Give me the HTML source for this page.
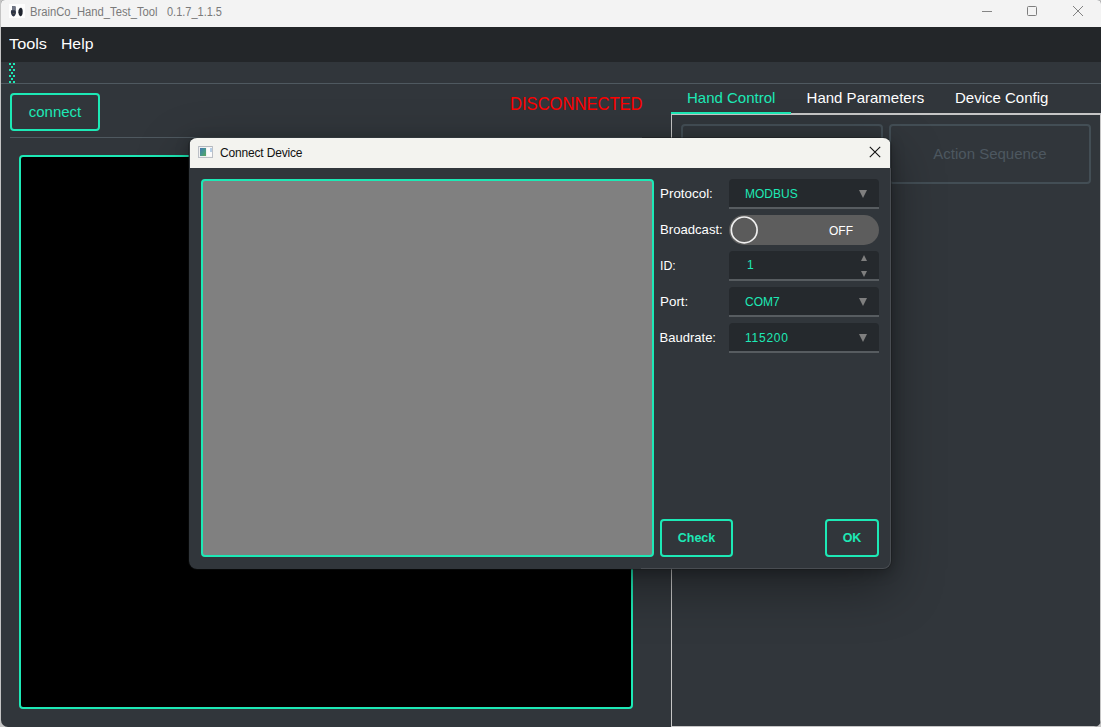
<!DOCTYPE html>
<html><head><meta charset="utf-8">
<style>
*{box-sizing:border-box;margin:0;padding:0}
html,body{width:1101px;height:727px;overflow:hidden;background:#c4c4c4;font-family:"Liberation Sans",sans-serif;}
.abs{position:absolute}
#win{position:absolute;left:1px;top:0;width:1100px;height:727px;background:#31363b;border-radius:4px 4px 7px 7px;overflow:hidden}
#tbar{position:absolute;left:0;top:0;width:1100px;height:27px;background:#f3f3f3}
.ttl{position:absolute;top:5px;transform-origin:0 0;font-size:12px;line-height:14px;color:#7a7a7a;white-space:pre}
#menu{position:absolute;left:0;top:27px;width:1100px;height:35px;background:#232629}
.mi{position:absolute;transform-origin:0 0;top:8px;font-size:15px;line-height:18px;color:#fff}
#tool{position:absolute;left:0;top:62px;width:1100px;height:21px;background:#31363b}
.hl{position:absolute;height:1px;background:#4f5960}
.btn{position:absolute;border:2px solid #1de9b6;border-radius:4px;color:#1de9b6;text-align:center}
.tab{position:absolute;top:89px;font-size:15px;line-height:18px;color:#fff;white-space:nowrap}
.dbtn{position:absolute;border:2px solid #434e55;border-radius:4px;color:#4d5860;text-align:center;font-size:15px}
#dlg{position:absolute;left:188px;top:138px;width:702px;height:431px;background:#31363b;border-radius:8px;overflow:hidden;}
#dshadow{position:absolute;left:188px;top:138px;width:702px;height:431px;border-radius:8px;box-shadow:0 0 0 1px rgba(20,22,24,.35),0 18px 50px 2px rgba(0,0,0,.36),0 3px 14px rgba(0,0,0,.28)}
#dbord{position:absolute;left:0;top:30px;width:702px;height:401px;clip-path:inset(0 0 0 452px);border:1px solid rgba(160,160,165,.22);border-top:none;border-radius:0 0 8px 8px}
#dtb{position:absolute;left:0;top:0;width:700px;height:30px;background:#f3f3ef}
.lbl{position:absolute;left:469.6px;transform-origin:0 0;transform:scaleX(1.03);font-size:13px;line-height:16px;color:#fff;white-space:nowrap}
.cmb{position:absolute;left:539px;width:150px;height:30px;background:#25292d;border-bottom:2px solid #575c60;border-radius:4px 4px 0 0}
.cmb span{position:absolute;left:16px;top:8px;font-size:12px;line-height:14px;color:#1de9b6;white-space:nowrap}
.arr{position:absolute;width:0;height:0;border-left:4.5px solid transparent;border-right:4.5px solid transparent;border-top:8px solid #7f7f7f}
</style></head><body>
<div id="win">
  <div id="tbar">
    <svg class="abs" style="left:8px;top:4px" width="16" height="14" viewBox="0 0 16 14"><rect width="16" height="14" fill="#fdfdfd"/><path d="M3 2.6 Q3.2 2 3.9 2 L5.6 2 Q6.3 2 6.5 2.8 L6.6 6.3 Q7.2 7.5 6.9 9.5 L6 11.5 Q5 12.6 4.3 12.5 Q3 12 2.4 10.5 Q1.6 8.5 2 6.6 L3 6 Z" fill="#2e3545"/><path d="M3 2.6 Q3.2 2 3.9 2 L5.6 2 Q6.3 2 6.5 2.8 L6.6 6.3 L3 6.3 Z" fill="#717786"/><rect x="3.8" y="9" width="1.6" height=".7" fill="#8a7a50" opacity=".7"/><path d="M10.6 4.2 Q11.5 3.4 12.3 3.8 Q13.6 4.8 13.7 7 Q13.8 10 12.8 11.5 Q12 12.5 11.2 12.2 Q9.6 11 9.3 8.5 Q9.1 6 10.6 4.2 Z" fill="#1f242e"/></svg>
    <div class="ttl" style="left:28.6px;transform:scaleX(.937)">BrainCo_Hand_Test_Tool</div><div class="ttl" style="left:166px;transform:scaleX(.915)">0.1.7_1.1.5</div>
    <div class="abs" style="left:981px;top:11px;width:10px;height:1px;background:#858585"></div>
    <div class="abs" style="left:1026px;top:6px;width:10px;height:10px;border:1px solid #7e7e7e;border-radius:1.5px"></div>
    <svg class="abs" style="left:1071px;top:5px" width="12" height="12" viewBox="0 0 12 12"><path d="M1 1 L11 11 M11 1 L1 11" stroke="#828282" stroke-width="1" fill="none"/></svg>
  </div>
  <div id="menu">
    <div class="mi" style="left:7.6px;transform:scaleX(1.085)">Tools</div>
    <div class="mi" style="left:60.3px;transform:scaleX(1.05)">Help</div>
  </div>
  <div id="tool">
    <svg class="abs" style="left:8px;top:1px" width="6" height="20" viewBox="0 0 6 20" shape-rendering="crispEdges" fill="#1de9b6">
      <rect x="0" y="0" width="2" height="2"/><rect x="4" y="0" width="2" height="2"/>
      <rect x="2" y="3" width="2" height="2"/>
      <rect x="0" y="6" width="2" height="2"/><rect x="4" y="6" width="2" height="2"/>
      <rect x="2" y="9" width="2" height="2"/>
      <rect x="0" y="12" width="2" height="2"/><rect x="4" y="12" width="2" height="2"/>
      <rect x="2" y="15" width="2" height="2"/>
      <rect x="0" y="18" width="2" height="2"/><rect x="4" y="18" width="2" height="2"/>
    </svg>
  </div>
  <div class="hl" style="left:0;top:83px;width:1100px"></div>

  <div class="btn" style="left:9px;top:93px;width:90px;height:38px;font-size:15px;line-height:34px">connect</div>
  <div class="hl" style="left:9px;top:137px;width:632px"></div>
  <div class="abs" style="left:18px;top:155px;width:614px;height:554px;background:#000;border:2px solid #1de9b6;border-radius:4px"></div>

  <div class="abs" id="disc" style="left:508.7px;top:94px;font-size:17.5px;line-height:20px;color:#ff0000;white-space:nowrap;transform-origin:0 0;transform:scaleX(.947);">DISCONNECTED</div>

  <!-- tab widget -->
  <div class="abs" style="left:670px;top:113px;width:430px;height:614px;border:1px solid #c6c6c6;border-top-width:2px;border-radius:0 0 3px 0"></div>
  <div class="abs" style="left:670px;top:112px;width:120px;height:2px;background:#1de9b6"></div>
  <div class="tab" style="left:686px;color:#1de9b6">Hand Control</div>
  <div class="tab" style="left:805.6px">Hand Parameters</div>
  <div class="tab" style="left:954px">Device Config</div>
  <div class="dbtn" style="left:680px;top:124px;width:202px;height:60px"></div>
  <div class="dbtn" style="left:888px;top:124px;width:202px;height:60px;line-height:56px">Action Sequence</div>

  <!-- dialog -->
  <div id="dshadow"></div>
  <div id="dlg"><div class="abs" style="left:1px;top:0;width:701px;height:431px">
    <div id="dtb">
      <svg class="abs" style="left:8px;top:8px" width="15" height="12" viewBox="0 0 15 12">
        <defs><linearGradient id="g" x1="0" y1="0" x2="1" y2="1"><stop offset="0" stop-color="#4675b4"/><stop offset=".5" stop-color="#45958f"/><stop offset="1" stop-color="#5aa95c"/></linearGradient></defs>
        <rect x="0.5" y="0.5" width="14" height="11" fill="#f1f1f1" stroke="#bcc0c6"/>
        <rect x="1" y="0" width="13" height="1" fill="#b4b8be"/>
        <rect x="2" y="2" width="6" height="8" fill="url(#g)"/>
        <rect x="9" y="1.5" width="5" height="9" fill="#fbfbfb"/>
        <rect x="12.3" y="2" width="1.4" height="4" fill="#7aa6d2" opacity=".75"/>
      </svg>
      <div class="abs" style="left:30px;top:8px;font-size:12px;line-height:14px;color:#111;letter-spacing:-0.17px;white-space:nowrap">Connect Device</div>
      <svg class="abs" style="left:679px;top:8px" width="12" height="12" viewBox="0 0 12 12"><path d="M0.8 0.8 L11.2 11.2 M11.2 0.8 L0.8 11.2" stroke="#111" stroke-width="1.1" fill="none"/></svg>
    </div>
    <div class="abs" style="left:11px;top:41px;width:453px;height:378px;background:#808080;border:2px solid #1de9b6;border-radius:4px"></div>

    <div class="lbl" style="top:48px">Protocol:</div>
    <div class="lbl" style="top:84px;transform:scaleX(1.01)">Broadcast:</div>
    <div class="lbl" style="top:120px;transform:scaleX(.95)">ID:</div>
    <div class="lbl" style="top:156px">Port:</div>
    <div class="lbl" style="top:192px;transform:scaleX(1.0)">Baudrate:</div>

    <div class="cmb" style="top:41px"><span>MODBUS</span><div class="arr" style="left:130px;top:11px"></div></div>
    <div class="abs" style="left:539px;top:77px;width:150px;height:30px;border-radius:15px;background:#5d5d5d">
      <svg class="abs" style="left:0;top:0" width="32" height="30"><circle cx="15.2" cy="14.9" r="12.9" fill="#5b5b5b" stroke="#efefef" stroke-width="1.7"/></svg>
      <div class="abs" style="left:100px;top:9px;font-size:12px;line-height:14px;color:#fff">OFF</div>
    </div>
    <div class="cmb" style="top:113px"><span style="left:18px;top:7px">1</span>
      <div class="arr" style="left:132.4px;top:4px;border-top:none;border-bottom:6px solid #7f7f7f;border-left-width:3.5px;border-right-width:3.5px"></div>
      <div class="arr" style="left:132.4px;top:20px;border-top-width:6px;border-left-width:3.5px;border-right-width:3.5px"></div>
    </div>
    <div class="cmb" style="top:149px"><span>COM7</span><div class="arr" style="left:130px;top:11px"></div></div>
    <div class="cmb" style="top:185px"><span style="letter-spacing:.75px">115200</span><div class="arr" style="left:130px;top:11px"></div></div>

    <div class="btn" style="left:470px;top:381px;width:73px;height:38px;font-size:12.5px;font-weight:bold;line-height:35px">Check</div>
    <div class="btn" style="left:635px;top:381px;width:54px;height:38px;font-size:12.5px;font-weight:bold;line-height:35px">OK</div>
    </div><div id="dbord"></div>
  </div>
</div>
</body></html>
